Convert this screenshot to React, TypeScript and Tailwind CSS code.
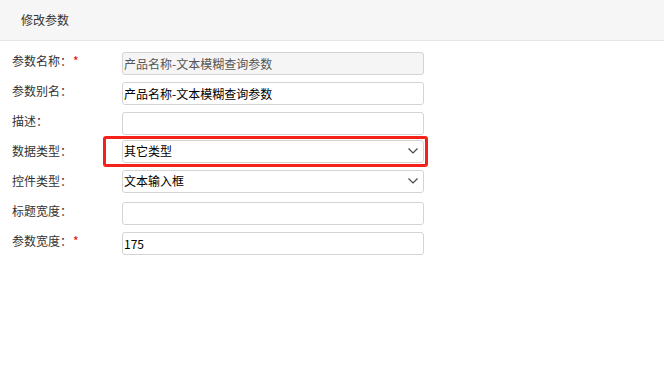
import React from 'react';

const Chevron = () => (
  <svg className="absolute right-[6px] top-1/2 -translate-y-1/2 pointer-events-none" width="10" height="6" viewBox="0 0 10 6" fill="none">
    <path d="M0.5 0.5l4.5 4.5L9.5 0.5" stroke="#444" strokeWidth="1.1" />
  </svg>
);

const Field = ({ label, required, children, highlight }: { label: string; required?: boolean; children: React.ReactNode; highlight?: boolean }) => (
  <div className="flex items-center h-[30px]">
    <div className="w-[122px] pl-[12px] text-[12px] text-[#333]">
      {label}：{required && <span className="text-[#e00] ml-[1px]">*</span>}
    </div>
    <div className="relative w-[302px] h-[23px]">
      {highlight && (
        <div className="absolute left-[-19px] right-[-4px] top-[-4px] bottom-[-4px] border-[3px] border-[#f5221b] rounded-[3px] pointer-events-none" />
      )}
      {children}
    </div>
  </div>
);

const baseCls = 'w-full h-full border border-[#d4d4d4] rounded-[3px] px-[1px] text-[12px] outline-none';
const inputCls = baseCls + ' bg-white text-black';
const disabledCls = baseCls + ' bg-[#f5f5f5] text-[#555]';

const SelectBox = ({ value }: { value: string }) => (
  <div className="relative w-full h-full">
    <div className="w-full h-full border border-[#d4d4d4] rounded-[3px] px-[1px] text-[12px] text-black bg-white flex items-center">{value}</div>
    <Chevron />
  </div>
);

export default function App() {
  return (
    <div className="w-[664px] h-[381px] bg-white" style={{ fontFamily: '"Microsoft YaHei", "Noto Sans CJK SC", sans-serif' }}>
      <div className="h-[41px] bg-[#f6f6f6] border-b border-[#e6e6e6] flex items-center pl-[21px] text-[12px] text-[#333]">
        修改参数
      </div>
      <div className="pt-[5px]">
        <Field label="参数名称" required>
          <input className={disabledCls} defaultValue="产品名称-文本模糊查询参数" disabled />
        </Field>
        <Field label="参数别名">
          <input className={inputCls} defaultValue="产品名称-文本模糊查询参数" />
        </Field>
        <Field label="描述">
          <input className={inputCls} defaultValue="" />
        </Field>
        <Field label="数据类型" highlight>
          <SelectBox value="其它类型" />
        </Field>
        <Field label="控件类型">
          <SelectBox value="文本输入框" />
        </Field>
        <Field label="标题宽度">
          <input className={inputCls} defaultValue="" />
        </Field>
        <Field label="参数宽度" required>
          <input className={inputCls} defaultValue="175" />
        </Field>
      </div>
    </div>
  );
}
